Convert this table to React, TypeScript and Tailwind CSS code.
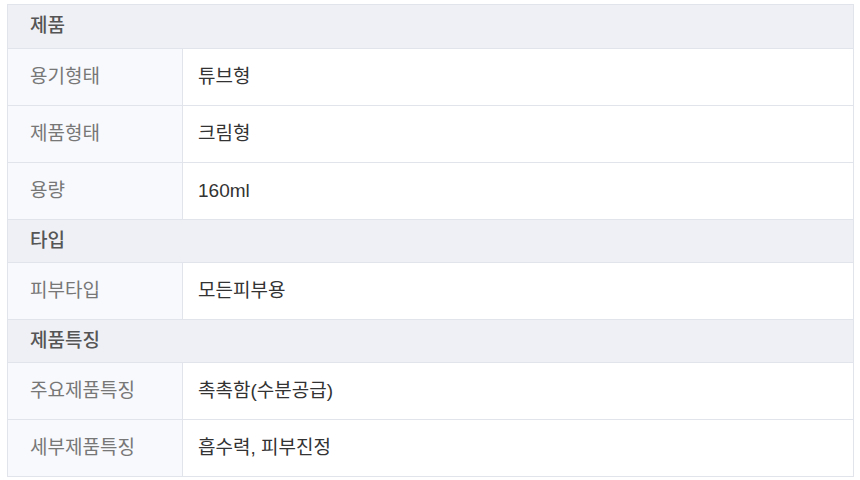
import React from 'react'

type Row = { kind: 'section'; title: string } | { kind: 'item'; label: string; value: string }

const ROWS: Row[] = [
  { kind: 'section', title: '제품' },
  { kind: 'item', label: '용기형태', value: '튜브형' },
  { kind: 'item', label: '제품형태', value: '크림형' },
  { kind: 'item', label: '용량', value: '160ml' },
  { kind: 'section', title: '타입' },
  { kind: 'item', label: '피부타입', value: '모든피부용' },
  { kind: 'section', title: '제품특징' },
  { kind: 'item', label: '주요제품특징', value: '촉촉함(수분공급)' },
  { kind: 'item', label: '세부제품특징', value: '흡수력, 피부진정' },
]

export default function App() {
  return (
    <div className="w-[860px] h-[480px] bg-white pt-[4px] pl-[7px] font-['Liberation_Sans','Noto_Sans_CJK_KR',sans-serif]">
      <table className="w-[847px] border-collapse border border-[#e1e4ea] text-[19px]">
        <colgroup>
          <col className="w-[175px]" />
          <col />
        </colgroup>
        <tbody>
          {ROWS.map((r, i) =>
            r.kind === 'section' ? (
              <tr key={i} className={`${i === 0 ? 'h-[44px]' : 'h-[43px]'} bg-[#eef0f5] border-b border-[#e1e4ea]`}>
                <td colSpan={2} className="pl-[22px] font-medium text-[#555]">{r.title}</td>
              </tr>
            ) : (
              <tr key={i} className="h-[57px] border-b border-[#e1e4ea]">
                <td className="pl-[22px] bg-[#f8f9fc] border-r border-[#e1e4ea] text-[#777]">{r.label}</td>
                <td className="pl-[15px] text-[#333]">{r.value}</td>
              </tr>
            )
          )}
        </tbody>
      </table>
    </div>
  )
}
